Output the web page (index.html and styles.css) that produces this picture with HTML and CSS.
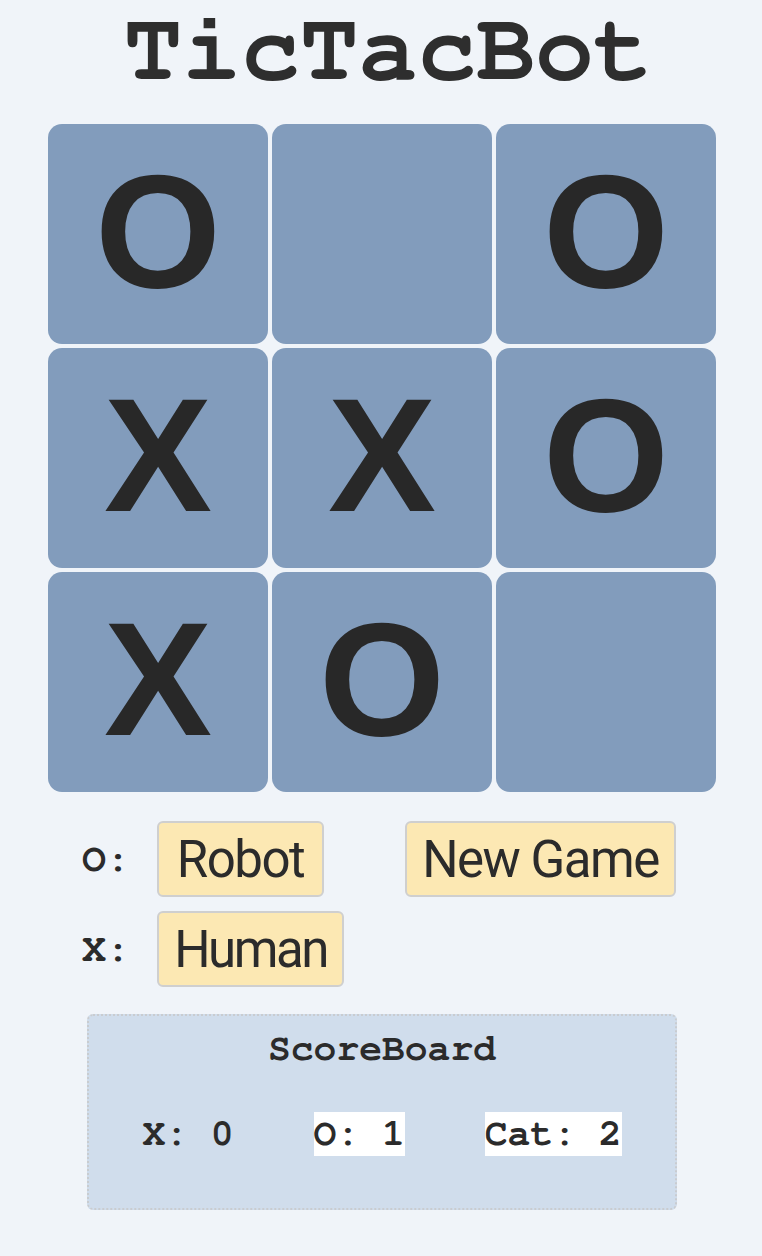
FILE: index.html
```html
<!DOCTYPE html>
<html>
<head>
<meta charset="utf-8">
<link rel="stylesheet" href="styles.css">
</head>
<body>
<h1 class="title">TicTacBot</h1>
<div class="board">
  <div class="cell">O</div>
  <div class="cell"></div>
  <div class="cell">O</div>
  <div class="cell">X</div>
  <div class="cell">X</div>
  <div class="cell">O</div>
  <div class="cell">X</div>
  <div class="cell">O</div>
  <div class="cell"></div>
</div>
<div class="controls">
  <span class="label">O:</span>
  <button class="btn btn-robot">Robot</button>
  <button class="btn btn-new">New Game</button>
  <span class="label">X:</span>
  <button class="btn btn-human">Human</button>
</div>
<div class="scoreboard">
  <h2 class="sb-title">ScoreBoard</h2>
  <div class="scores">
    <span class="score">X: 0</span>
    <span class="score score-hl">O: 1</span>
    <span class="score score-hl">Cat: 2</span>
  </div>
</div>
</body>
</html>
```

FILE: styles.css
```css
html, body {
  background: #f0f4f9;
}
body {
  margin: 2px 0 0 0;
  color: #2b2b2b;
}
.title {
  margin: 0;
  padding-left: 14px;
  text-align: center;
  font-family: "Nimbus Mono PS", "Nimbus Mono L", "FreeMono", "Courier New", "Liberation Mono", monospace;
  font-weight: bold;
  font-size: 98px;
  line-height: 96px;
  color: #2e2e2e;
}
.board {
  margin: 26px 0 0 48px;
  width: 668px;
  display: grid;
  grid-template-columns: repeat(3, 220px);
  grid-template-rows: repeat(3, 220px);
  gap: 4px;
}
.cell {
  background: #829cbc;
  border-radius: 14px;
  display: flex;
  align-items: center;
  justify-content: center;
  font-family: "Liberation Sans", Arial, sans-serif;
  font-weight: 700;
  font-size: 162px;
  line-height: 1;
  color: #282828;
  padding-bottom: 6px;
  box-sizing: border-box;
}
.controls {
  margin: 29px 0 0 82px;
  display: grid;
  grid-template-columns: 75px auto auto;
  grid-template-rows: 76px 76px;
  row-gap: 14px;
  justify-content: start;
  align-items: center;
}
.label {
  font-family: "Nimbus Mono PS", "Nimbus Mono L", "FreeMono", "Courier New", "Liberation Mono", monospace;
  font-weight: bold;
  font-size: 40px;
  color: #2b2b2b;
}
.btn {
  height: 76px;
  box-sizing: border-box;
  padding: 0;
  text-align: center;
  background: #fce8b3;
  border: 2px solid #cfcfcf;
  border-radius: 6px;
  font-family: Roboto, "Liberation Sans", sans-serif;
  font-size: 51px;
  letter-spacing: -1.5px;
  color: #2b2b2b;
  justify-self: start;
}
.btn-robot {
  width: 167px;
}
.btn-human {
  width: 187px;
  letter-spacing: -2.5px;
}
.btn-new {
  width: 271px;
  margin-left: 61px;
}
.scoreboard {
  margin: 27px 0 0 87px;
  width: 590px;
  height: 196px;
  box-sizing: border-box;
  background: #d0ddec;
  border: 2px dotted #c9ccd0;
  border-radius: 6px;
  padding-top: 12px;
}
.sb-title {
  margin: 0;
  text-align: center;
  font-family: "Nimbus Mono PS", "Nimbus Mono L", "FreeMono", "Courier New", "Liberation Mono", monospace;
  font-weight: bold;
  font-size: 38px;
  line-height: 43px;
  color: #2b2b2b;
}
.scores {
  margin-top: 41px;
  display: flex;
  justify-content: center;
  gap: 80px;
}
.score {
  display: inline-block;
  height: 44px;
  font-family: "Nimbus Mono PS", "Nimbus Mono L", "FreeMono", "Courier New", "Liberation Mono", monospace;
  font-weight: bold;
  font-size: 38px;
  line-height: 44px;
  color: #2b2b2b;
}
.score-hl {
  background: #ffffff;
}
```
